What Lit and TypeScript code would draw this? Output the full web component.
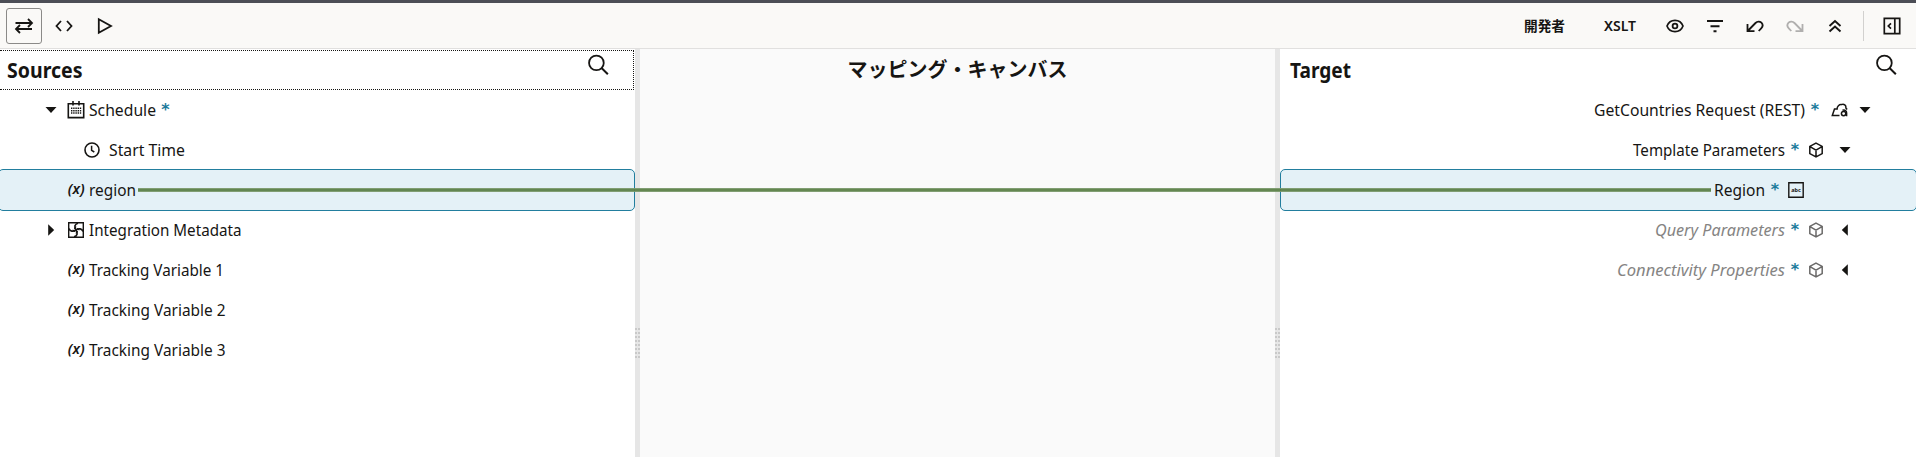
import { LitElement, html, css, svg } from "lit";
import { customElement, property } from "lit/decorators.js";
import { classMap } from "lit/directives/class-map.js";

const glyphs: Record<string, unknown> = {
  swap: svg`<path d="M1.500 7H18M14 3l4 4-4 4M18 13H2M6 9l-4 4 4 4" stroke-width="1.8"/>`,
  code: svg`<path d="M7 5 2.500 10 7 15M13 5l4.500 5-4.500 5" stroke-width="1.8"/>`,
  play: svg`<path d="M4.800 3.200v13.600L17 10z" stroke-width="1.800" stroke-linejoin="miter"/>`,
  eye: svg`<path d="M2 10C3.500 6 6.500 4.300 10 4.300S16.500 6 18 10C16.500 14 13.500 15.700 10 15.700S3.500 14 2 10z" stroke-width="1.7"/><circle cx="10" cy="10" r="2.400" stroke-width="1.8"/>`,
  filter: svg`<path d="M2 5h16M5.500 10.300h9M8.500 15.200h3" stroke-width="1.9"/>`,
  undo: svg`<path d="M2.500 8v7.200H9.500M2.700 15l7.800-8c1.800-1.900 4.300-1.900 5.900-.3 1.500 1.600 1.400 4-.2 5.600L13.700 15" stroke-width="1.800"/>`,
  redo: svg`<path d="M17.500 8v7.200H10.500M17.300 15l-7.800-8C7.700 5.100 5.200 5.100 3.600 6.700c-1.500 1.600-1.400 4 .2 5.600L6.300 15" stroke-width="1.800"/>`,
  up: svg`<path d="M4.500 10 10 5l5.500 5M4.500 15.500l5.500-5 5.500 5" stroke-width="1.9"/>`,
  panel: svg`<path d="M2.300 2.300h15.400v15.400H2.300zM12.800 2.500v15M9 7.300 6.300 10 9 12.700" stroke-width="1.7"/>`,
  search: svg`<circle cx="8" cy="7.500" r="7" stroke-width="1.700"/><path d="m12.900 12.400 6 6" stroke-width="1.900"/>`,
  calendar: svg`<path d="M2.300 3.800h15.400v13.800H2.300zM7 1v4.500M13 1v4.500" stroke-width="1.600"/><path d="M5 8.300h10.200M5 10.700h10.200M5 13.100h10.200" stroke-width="1.500" stroke-dasharray="1.400 .8"/>`,
  clock: svg`<circle cx="10" cy="10" r="7" stroke-width="1.6"/><path d="M9.600 5.800v4.500l2.700 1.700" stroke-width="1.5"/>`,
  meta: svg`<path d="M2.700 2.700h14.600v14.600H2.700z" stroke-width="1.400"/><path d="M12 3.200C8.500 4 8 7 10 10c3-2 6-1.500 7 1.600M10 10c-3 2-6 1.500-7-1.600M10 10c2 3 1.500 6-2 6.800" stroke-width="1.600"/><path d="M10 6.500 8.500 9M13.500 10 11 8.500M10 13.500l1.500-2.500M6.500 10 9 11.500" stroke-width="1.300"/>`,
  cube: svg`<path d="M10 3.200 16.200 6.400v7.200L10 16.800l-6.200-3.200V6.400zM4 6.600l6 3.600 6-3.600M10 10.200v6.300" stroke-width="1.500"/>`,
  rest: svg`<path d="M9.500 15.500H2.300L4.500 9h2.600C7 6.500 9.200 4.200 11.500 4.600 14 3.600 16.300 5.400 15.900 8l1.200 1.500" stroke-width="1.500"/><circle cx="13.600" cy="13.600" r="2.200" stroke-width="1.500"/><path d="M12.500 10.300c2.600-.8 4.200.5 4.100 2.700v3.200" stroke-width="1.500"/>`,
  down: svg`<path d="M4.500 6.900h11L10 13z" class="solid"/>`,
  right: svg`<path d="M7.200 4.200v11.600L13.200 10z" class="solid"/>`,
  left: svg`<path d="M12.800 4.200v11.600L6.800 10z" class="solid"/>`,
};

@customElement("ui-glyph")
class UiGlyph extends LitElement {
  @property() name = "";
  @property({ type: Number }) size = 20;
  static styles = css`
    :host { display: inline-flex; flex: none; }
    svg { display: block; overflow: visible; fill: none; stroke: currentColor; }
    .solid { fill: currentColor; stroke: none; }
    text { font: 700 6px "Noto Sans", sans-serif; fill: currentColor; stroke: none; }
    .var { font: italic 600 15px "Noto Sans", sans-serif; }
  `;
  render() {
    const body =
      this.name === "abc"
        ? svg`<path d="M2.800 2.800h14.400v14.400H2.800z" stroke-width="1.400"/><text x="5.200" y="11.800" textLength="9.600" lengthAdjust="spacingAndGlyphs">abc</text>`
        : this.name === "var"
          ? svg`<text class="var" x="1.800" y="14" textLength="16.800" lengthAdjust="spacingAndGlyphs">(x)</text>`
          : glyphs[this.name];
    return html`<svg width=${this.size} height=${this.size} viewBox="0 0 20 20">${body}</svg>`;
  }
}

@customElement("fit-text")
class FitText extends LitElement {
  @property() text = "";
  @property({ type: Number }) measure = 0;
  static styles = css`
    :host { display: inline-flex; flex: none; }
    svg { display: block; overflow: visible; }
    text { fill: currentColor; font: inherit; }
  `;
  render() {
    return html`<svg width=${this.measure} height="24">
      <text x="0" y="18" textLength=${this.measure} lengthAdjust="spacingAndGlyphs">${this.text}</text>
    </svg>`;
  }
}

interface Row {
  label: string;
  w: number;
  level: number;
  icon: string;
  caret?: string;
  star?: boolean;
  on?: boolean;
  ghost?: boolean;
}

const sources: Row[] = [
  { label: "Schedule", w: 67, level: 0, icon: "calendar", caret: "down", star: true },
  { label: "Start Time", w: 76, level: 1, icon: "clock" },
  { label: "region", w: 47, level: 0, icon: "var", on: true },
  { label: "Integration Metadata", w: 152.5, level: 0, icon: "meta", caret: "right" },
  { label: "Tracking Variable 1", w: 135, level: 0, icon: "var" },
  { label: "Tracking Variable 2", w: 136.5, level: 0, icon: "var" },
  { label: "Tracking Variable 3", w: 136.5, level: 0, icon: "var" },
];

const targets: Row[] = [
  { label: "GetCountries Request (REST)", w: 211, level: 0, icon: "rest", caret: "down", star: true },
  { label: "Template Parameters", w: 152, level: 1, icon: "cube", caret: "down", star: true },
  { label: "Region", w: 51, level: 2, icon: "abc", star: true, on: true },
  { label: "Query Parameters", w: 130, level: 1, icon: "cube", caret: "left", star: true, ghost: true },
  { label: "Connectivity Properties", w: 168, level: 1, icon: "cube", caret: "left", star: true, ghost: true },
];

@customElement("app-root")
class AppRoot extends LitElement {
  static styles = css`
    * { box-sizing: border-box; }
    :host {
      display: flex; flex-direction: column; position: relative;
      height: 457px; overflow: hidden; background: #fff; color: #161513;
      font-family: "Noto Sans", "Noto Sans CJK JP", sans-serif; font-size: 16.300px;
    }
    .bar {
      flex: none; height: 49px; display: flex; align-items: center;
      background: #faf9f7; border-top: 3px solid #4c4e56; border-bottom: 1px solid #e1e0df;
      padding: 0 2px 0 6px;
    }
    .btn { width: 36px; height: 36px; margin-right: 4px; display: flex; align-items: center; justify-content: center; border-radius: 3px; }
    .btn.on { border: 1px solid #8b8a88; }
    .btn.off { color: #b0afae; }
    .space { flex: 1; }
    .word { font-size: 14px; font-weight: 600; margin-right: 39px; display: flex; }
    .word.last { margin-right: 21px; font-size: 14.500px; font-weight: 600; }
    .word fit-text { margin-top: -1px; }
    .jp { font-family: "Noto Sans CJK JP", sans-serif; font-weight: 700; }
    .rule { width: 1px; height: 30px; background: #d2d1cf; margin: 0 10px 0 6px; }
    .main { flex: 1; display: flex; min-height: 0; }
    .pane { width: 635px; overflow: hidden; }
    .pane.end { width: 636px; }
    .canvas { width: 635px; background: #fafafa; text-align: center; padding-top: 5px; font: 700 20px/30px "Noto Sans CJK JP", sans-serif; }
    .grip { width: 5px; background: #e6e6e6; display: flex; flex-wrap: wrap; align-content: flex-start; gap: 2px 1px; padding-top: 279px; }
    .dot { width: 2px; height: 2px; background: #c9c9c9; }
    .head { height: 40px; margin: 1px 1px 0 0; padding: 4px 24px 0 7px; display: flex; justify-content: space-between; border: 1px dotted transparent; font-size: 20.500px; font-weight: 700; }
    .head fit-text { margin-top: 5px; }
    .head.focus { border-color: #161513; border-left: 0; }
    .end .head { padding: 4px 17px 0 9px; }
    .row { height: 40px; display: flex; align-items: center; padding-left: 40px; }
    .l1 { padding-left: 56px; }
    .row.on { height: 42px; margin: -1px 0 -1px -2px; padding-left: 41px; background: #e4f1f7; border: 1px solid #227e9e; border-radius: 5px; }
    .caret { width: 22px; display: flex; justify-content: center; }
    .icon { width: 28px; display: flex; justify-content: center; }
    .name { display: flex; margin-left: -1.500px; }
    .l1 .name { margin-left: 3px; }
    .star { width: 20px; text-align: center; color: #1b7a9b; font: 700 16px/24px "DejaVu Sans", sans-serif; height: 24px; }
    .end .row { flex-direction: row-reverse; padding: 0 40px 0 0; }
    .end .icon { width: 29px; }
    .end .row.l1 { padding-right: 60px; }
    .end .row.l2 { padding-right: 102px; }
    .end .l1 .icon, .end .l2 .icon { padding-right: 7px; }
    .end .row.on { margin: -1px -1px -1px 0; }
    .end .name { margin: 0 .500px 0 0; }
    .ghost .name { color: #858483; font-style: italic; }
    .ghost .icon { color: #6b6a69; }
    .link { position: absolute; left: 138px; top: 188px; width: 1573px; height: 4px; background: #5c8149; border: 1px solid #7b9a6c; border-width: 1px 0; opacity: 0.95; }
  `;

  row(r: Row) {
    return html`<div class=${classMap({ row: true, ["l" + r.level]: true, on: !!r.on, ghost: !!r.ghost })}>
      <span class="caret">${r.caret ? html`<ui-glyph name=${r.caret}></ui-glyph>` : ""}</span>
      <span class="icon"><ui-glyph name=${r.icon}></ui-glyph></span>
      <span class="name"><fit-text text=${r.label} measure=${r.w}></fit-text></span>
      ${r.star ? html`<span class="star">*</span>` : ""}
    </div>`;
  }

  targetRow(r: Row) {
    return html`<div class=${classMap({ row: true, ["l" + r.level]: true, on: !!r.on, ghost: !!r.ghost })}>
      ${r.caret ? html`<span class="caret"><ui-glyph name=${r.caret}></ui-glyph></span>` : ""}
      <span class="icon"><ui-glyph name=${r.icon}></ui-glyph></span>
      <span class="star">*</span>
      <span class="name"><fit-text text=${r.label} measure=${r.w}></fit-text></span>
    </div>`;
  }

  grip() {
    return html`<div class="grip">${Array.from({ length: 16 }, () => html`<i class="dot"></i>`)}</div>`;
  }

  render() {
    return html`
      <div class="bar">
        <span class="btn on"><ui-glyph name="swap"></ui-glyph></span>
        <span class="btn"><ui-glyph name="code"></ui-glyph></span>
        <span class="btn"><ui-glyph name="play"></ui-glyph></span>
        <span class="space"></span>
        <span class="word jp"><fit-text text="開発者" measure="41"></fit-text></span>
        <span class="word last"><fit-text text="XSLT" measure="32"></fit-text></span>
        ${["eye", "filter", "undo", "redo", "up"].map(
          (n) => html`<span class=${classMap({ btn: true, off: n === "redo" })}><ui-glyph name=${n}></ui-glyph></span>`
        )}
        <span class="rule"></span>
        <span class="btn"><ui-glyph name="panel"></ui-glyph></span>
      </div>
      <div class="main">
        <section class="pane">
          <div class="head focus"><fit-text text="Sources" measure="75.5"></fit-text><ui-glyph name="search" size="21"></ui-glyph></div>
          ${sources.map((r) => this.row(r))}
        </section>
        ${this.grip()}
        <section class="canvas">マッピング・キャンバス</section>
        ${this.grip()}
        <section class="pane end">
          <div class="head"><fit-text text="Target" measure="61"></fit-text><ui-glyph name="search" size="21"></ui-glyph></div>
          ${targets.map((r) => this.targetRow(r))}
        </section>
      </div>
      <div class="link"></div>
    `;
  }
}
